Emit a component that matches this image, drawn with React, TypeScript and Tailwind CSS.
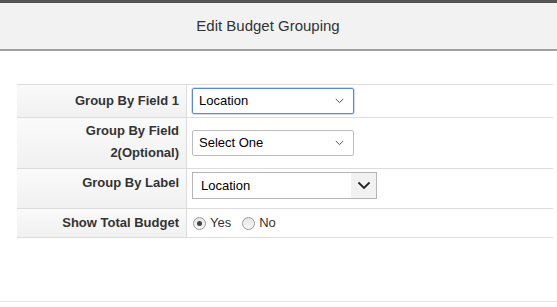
import React from "react";

function SmallChevron() {
  return (
    <svg width="9" height="6" viewBox="0 0 9 6" className="shrink-0">
      <path d="M0.8 1 L4.5 4.6 L8.2 1" fill="none" stroke="#555" strokeWidth="1" />
    </svg>
  );
}

function BigChevron() {
  return (
    <svg width="14" height="9" viewBox="0 0 14 9">
      <path d="M1.5 1.5 L7 7 L12.5 1.5" fill="none" stroke="#222" strokeWidth="1.8" />
    </svg>
  );
}

function Radio({ checked }: { checked: boolean }) {
  return (
    <span className="relative inline-flex h-[13px] w-[13px] items-center justify-center rounded-full border border-[#9a9a9a] bg-gradient-to-b from-[#e6e6e6] to-[#f8f8f8]">
      {checked && <span className="h-[5px] w-[5px] rounded-full bg-[#444]" />}
    </span>
  );
}

export default function App() {
  const labelCls =
    "w-[170px] shrink-0 border-r border-[#dcdcdc] bg-gradient-to-b from-[#fafafa] to-[#f1f1f1] pr-[7px] text-right text-[13px] font-bold leading-[22px] text-[#333]";
  return (
    <div className="h-[307px] w-[557px] bg-white" style={{ fontFamily: '"Liberation Sans", Arial, sans-serif' }}>
      <div className="flex h-[51px] items-center justify-center border-t-[3px] border-b-2 border-t-[#555] border-b-[#a0a0a0] bg-[#f2f2f2] pr-[21px] text-[15px] text-[#333]">
        Edit Budget Grouping
      </div>
      <div className="h-[251px] border-b border-[#e5e5e5] pt-[33px]">
        <div className="ml-[17px] w-[536px] border-t border-[#dcdcdc]">
          {/* Row 1 */}
          <div className="flex h-[33px] border-b border-[#dcdcdc]">
            <div className={labelCls + " flex items-center justify-end"}>Group By Field 1</div>
            <div className="flex items-center pl-[5px]">
              <div className="flex h-[26px] w-[162px] items-center justify-between rounded-[2px] border border-[#5b8ad0] pl-[6px] pr-[9px] text-[13px] text-black shadow-[0_0_0_0.5px_#9bbbe8]">
                <span>Location</span>
                <SmallChevron />
              </div>
            </div>
          </div>
          {/* Row 2 */}
          <div className="flex h-[51px] border-b border-[#dcdcdc]">
            <div className={labelCls + " pt-[2px]"}>
              Group By Field
              <br />
              2(Optional)
            </div>
            <div className="flex items-center pl-[5px]">
              <div className="flex h-[26px] w-[162px] items-center justify-between rounded-[2px] border border-[#bdbdbd] pl-[6px] pr-[9px] text-[13px] text-black">
                <span>Select One</span>
                <SmallChevron />
              </div>
            </div>
          </div>
          {/* Row 3 */}
          <div className="flex h-[40px] border-b border-[#dcdcdc]">
            <div className={labelCls + " pt-[3px]"}>Group By Label</div>
            <div className="pl-[5px] pt-[3px]">
              <div className="flex h-[27px] w-[185px] items-stretch border border-[#b5b5b5] text-[13px] text-black">
                <span className="flex flex-1 items-center pl-[8px]">Location</span>
                <span className="flex w-[25px] items-center justify-center bg-[#f1f1f1]">
                  <BigChevron />
                </span>
              </div>
            </div>
          </div>
          {/* Row 4 */}
          <div className="flex h-[29px] border-b border-[#dcdcdc]">
            <div className={labelCls + " flex items-center justify-end"}>Show Total Budget</div>
            <div className="flex items-center pl-[6px] text-[13px] text-[#333]">
              <Radio checked />
              <span className="ml-[4px]">Yes</span>
              <span className="ml-[11px] flex items-center">
                <Radio checked={false} />
              </span>
              <span className="ml-[4px]">No</span>
            </div>
          </div>
        </div>
      </div>
    </div>
  );
}
